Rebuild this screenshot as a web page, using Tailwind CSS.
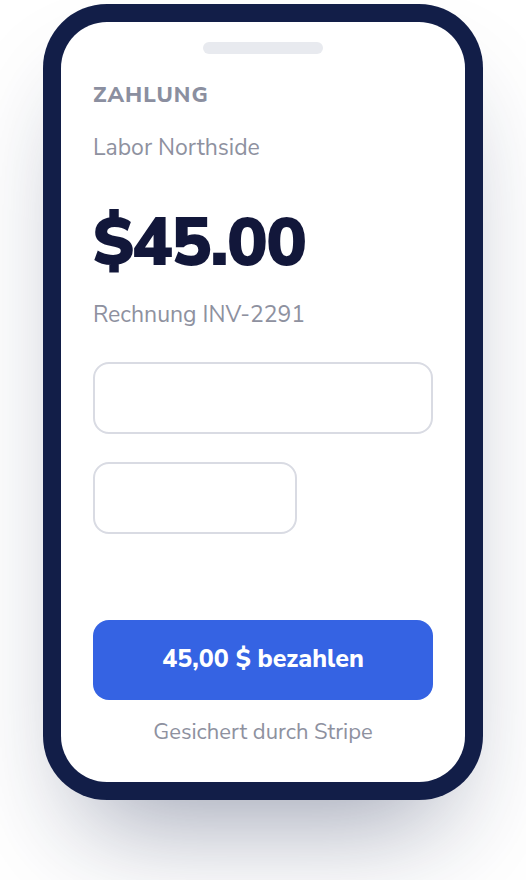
<!DOCTYPE html>
<html lang="de">
<head>
  <meta charset="utf-8">
  <meta name="viewport" content="width=device-width, initial-scale=1">
  <title>Zahlung</title>
  <script src="https://cdn.jsdelivr.net/npm/@tailwindcss/browser@4"></script>
</head>
<body class="min-h-screen overflow-hidden bg-white px-[43px] pt-1 pb-20 font-['Nunito_Sans',Nunito,'Open_Sans',sans-serif]">

  <!-- Phone -->
  <main class="mx-auto w-full max-w-[440px] rounded-[64px] bg-[#121e48] p-[18px] shadow-[0_60px_110px_-40px_rgba(18,30,72,0.42)]">
    <form class="flex flex-col rounded-[46px] bg-white px-8 pt-5 pb-[34px]">
      <div class="mx-auto h-3 w-[120px] rounded-md bg-[#e8eaef]"></div>

      <h1 class="mt-[25px] text-[22px] leading-8 font-extrabold tracking-wider text-[#8b8fa0]">ZAHLUNG</h1>
      <p class="mt-[21px] text-[23px] leading-8 text-[#8e919f]">Labor Northside</p>
      <p class="mt-[33px] text-[68px] leading-[92px] font-black tracking-tight text-[#12173a]">$45.00</p>
      <p class="mt-2.5 text-[23px] leading-8 text-[#8e919f]">Rechnung INV-2291</p>

      <input type="text" aria-label="Kartennummer" class="mt-[31px] h-[72px] w-full rounded-2xl border-2 border-[#d9dbe3] px-5 text-[22px]">
      <input type="text" aria-label="Ablaufdatum" class="mt-7 h-[72px] w-3/5 rounded-2xl border-2 border-[#d9dbe3] px-5 text-[22px]">

      <button type="submit" class="mt-[86px] h-20 w-full rounded-2xl bg-[#3563e3] text-[25px] font-extrabold text-white">45,00 $ bezahlen</button>
      <p class="mt-4 text-center text-[22px] leading-8 text-[#8e919f]">Gesichert durch Stripe</p>
    </form>
  </main>

</body>
</html>
